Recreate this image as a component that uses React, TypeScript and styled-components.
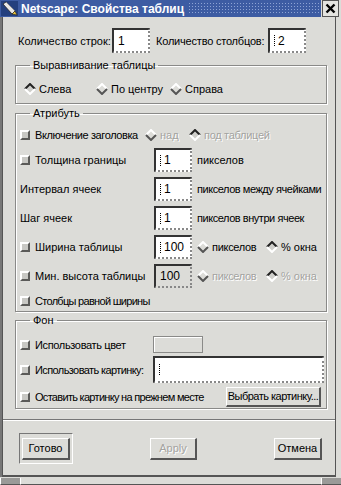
import React, { FC } from 'react'
import styled, { createGlobalStyle, css } from 'styled-components'

const GlobalStyle = createGlobalStyle`
  html, body {
    margin: 0;
    padding: 0;
    background: #dcdcd8;
  }
`;

const BG = '#dcdcd8';

const Window = styled.div`
  width: 341px;
  height: 485px;
  display: flex;
  flex-direction: column;
  background: ${BG};
  font-family: "Liberation Sans", Arial, sans-serif;
  font-size: 11px;
  color: #000;
  overflow: hidden;
  box-sizing: border-box;
`;

const TitleBar = styled.div`
  height: 17px;
  display: flex;
  align-items: stretch;
  flex-shrink: 0;
`;

const TitleBlue = styled.div`
  flex: 1;
  display: flex;
  align-items: center;
  background: #3d5ca3;
  padding-left: 1px;
`;

const Title = styled.span`
  color: #fff;
  font-weight: bold;
  font-size: 12px;
  margin-left: 3px;
  white-space: nowrap;
`;

const Dots = styled.span`
  flex: 1;
  align-self: stretch;
  margin: 2px 0 2px 4px;
  background-image: radial-gradient(circle, #8da3d4 0.7px, transparent 0.9px);
  background-size: 3px 3px;
`;

const CloseBox = styled.div`
  width: 15px;
  height: 15px;
  margin: 0 2px 0 1px;
  border: 1px solid #555;
  background: #e4e4e0;
  display: flex;
  align-items: center;
  justify-content: center;
`;

const Frame = styled.div`
  flex: 1;
  display: flex;
  flex-direction: column;
  margin: 0 5px 0 2px;
  border-left: 1px solid #555;
  border-right: 1px solid #555;
  border-bottom: 2px solid #555;
  box-shadow: -2px 0 0 #777;
`;

const TopRow = styled.div`
  display: flex;
  align-items: center;
  height: 25px;
  margin-top: 11px;
  padding-left: 15px;
`;

const dimText = css`
  color: #a3a3a0;
  text-shadow: 1px 1px 0 #fff;
`;

const Label = styled.span<{ $w?: number; $dim?: boolean; $ls?: number }>`
  white-space: nowrap;
  ${p => p.$w !== undefined && css`width: ${p.$w}px; flex-shrink: 0;`}
  ${p => p.$ls !== undefined && css`letter-spacing: ${p.$ls}px;`}
  ${p => p.$dim && dimText}
`;

const Field = styled.div<{ $w?: number; $h?: number; $disabled?: boolean }>`
  box-sizing: border-box;
  width: ${p => p.$w ?? 38}px;
  height: ${p => p.$h ?? 24}px;
  flex-shrink: 0;
  display: flex;
  align-items: center;
  padding-left: 4px;
  background: ${p => (p.$disabled ? BG : '#fff')};
  border-top: 2px solid #333;
  border-left: 2px solid #333;
  border-right: 2px dotted #888;
  border-bottom: 2px dotted #888;
  font-size: 12px;
`;

const Caret = styled.span`
  width: 2px;
  height: 11px;
  margin-right: 1px;
  border-left: 1px dotted #000;
  flex-shrink: 0;
`;

const Group = styled.fieldset<{ $pt: number; $pb: number; $mt: number }>`
  margin: ${p => p.$mt}px 0 0 12px;
  width: 312px;
  box-sizing: border-box;
  padding: ${p => p.$pt}px 5px ${p => p.$pb}px 4px;
  border: 1px solid #8a8a88;
  box-shadow: 1px 1px 0 #fff, inset 1px 1px 0 #fff;
  min-width: 0;
`;

const Legend = styled.legend`
  margin-left: 10px;
  padding: 0 3px;
  line-height: 14px;
  height: 14px;
  font-size: 11px;
`;

const RadioRow = styled.div`
  display: flex;
  align-items: center;
  height: 14px;
  padding-left: 4px;
`;

const Option = styled.label<{ $w?: number; $ml?: number }>`
  display: flex;
  align-items: center;
  gap: 3px;
  white-space: nowrap;
  ${p => p.$w !== undefined && css`width: ${p.$w}px; flex-shrink: 0;`}
  ${p => p.$ml !== undefined && css`margin-left: ${p.$ml}px;`}
`;

const Row = styled.div<{ $h: number; $mt: number }>`
  display: flex;
  align-items: center;
  height: ${p => p.$h}px;
  margin-top: ${p => p.$mt}px;
`;

const CheckLabel = styled.label<{ $w?: number }>`
  display: flex;
  align-items: center;
  gap: 5px;
  white-space: nowrap;
  ${p => p.$w !== undefined && css`width: ${p.$w}px; flex-shrink: 0;`}
`;

const Box = styled.span`
  box-sizing: border-box;
  width: 10px;
  height: 10px;
  flex-shrink: 0;
  background: #c8c8c4;
  border-top: 2px solid #fff;
  border-left: 2px solid #fff;
  border-right: 2px solid #5a5a58;
  border-bottom: 2px solid #5a5a58;
`;

const Unit = styled.span<{ $dim?: boolean; $ls?: number }>`
  margin-left: 5px;
  white-space: nowrap;
  ${p => p.$ls !== undefined && css`letter-spacing: ${p.$ls}px;`}
  ${p => p.$dim && dimText}
`;

const ColorWell = styled.div`
  width: 50px;
  height: 17px;
  box-sizing: border-box;
  border: 1px solid #8a8a88;
  box-shadow: inset 1px 1px 0 #fff;
  margin-left: -1px;
`;

const RaisedButton = styled.button<{ $w: number; $h: number; $ls?: number }>`
  box-sizing: border-box;
  width: ${p => p.$w}px;
  height: ${p => p.$h}px;
  padding: 0;
  white-space: nowrap;
  overflow: hidden;
  background: ${BG};
  font-family: inherit;
  font-size: 11px;
  color: #000;
  ${p => p.$ls !== undefined && css`letter-spacing: ${p.$ls}px;`}
  border-top: 1px solid #fff;
  border-left: 1px solid #fff;
  border-right: 2px solid #555;
  border-bottom: 2px solid #555;
  cursor: default;
  &:disabled {
    ${dimText}
  }
`;

const Separator = styled.div`
  margin-top: 10px;
  height: 0;
  border-top: 1px solid #777;
  border-bottom: 1px solid #fff;
`;

const ButtonRow = styled.div`
  display: flex;
  align-items: center;
  justify-content: space-between;
  margin-top: 12px;
  height: 31px;
  padding: 0 13px 0 16px;
`;

const DefaultRing = styled.div`
  box-sizing: border-box;
  width: 54px;
  height: 31px;
  display: flex;
  align-items: center;
  justify-content: center;
  border-top: 1px solid #777;
  border-left: 1px solid #777;
  border-right: 1px solid #fff;
  border-bottom: 1px solid #fff;
`;

const BottomEdge = styled.div`
  height: 8px;
  flex-shrink: 0;
  display: flex;
`;

const Handle = styled.div<{ $w?: number }>`
  ${p => (p.$w ? css`width: ${p.$w}px;` : css`flex: 1;`)}
  height: 6px;
  margin-top: 1px;
  background: ${p => (p.$w ? '#9a9a98' : BG)};
  border-left: 1px solid #fff;
  border-bottom: 1px solid #555;
`;

const AppIcon: FC = () => (
  <svg width="17" height="15" viewBox="0 0 17 15">
    <rect width="17" height="15" fill="#24407e" />
    <path d="M2 3 L5 1 L14 10 L11 13 Z" fill="#e8e8e8" stroke="#222" strokeWidth="0.8" />
    <path d="M5 1 L14 10" stroke="#888" strokeWidth="1" />
    <path d="M11 13 L14 10 L16 14 Z" fill="#e8c23a" stroke="#222" strokeWidth="0.6" />
  </svg>
);

const Diamond: FC<{ on?: boolean }> = ({ on }) => (
  <svg width="12" height="12" viewBox="0 0 12 12" style={{ flexShrink: 0 }}>
    <polygon points="6,1 11,6 6,11 1,6" fill={on ? '#cfcfcb' : BG} />
    <polyline points="1,6 6,1 11,6" fill="none" stroke={on ? '#222' : '#fff'} strokeWidth="2" />
    <polyline points="1,6 6,11 11,6" fill="none" stroke={on ? '#fff' : '#555'} strokeWidth="2" />
  </svg>
);

type RadioProps = { on?: boolean; dim?: boolean; w?: number; ml?: number; ls?: number; children: React.ReactNode };

const Radio: FC<RadioProps> = ({ on, dim, w, ml, ls, children }) => (
  <Option $w={w} $ml={ml}>
    <Diamond on={on} />
    <Label $dim={dim} $ls={ls}>{children}</Label>
  </Option>
);

const Check: FC<{ w?: number; ls?: number; children: React.ReactNode }> = ({ w, ls, children }) => (
  <CheckLabel $w={w}>
    <Box />
    <Label $ls={ls}>{children}</Label>
  </CheckLabel>
);

const Input: FC<{ value?: string; w?: number; h?: number; caret?: boolean; disabled?: boolean }> = ({ value, w, h, caret = true, disabled }) => (
  <Field $w={w} $h={h} $disabled={disabled}>
    {caret && <Caret />}
    {value}
  </Field>
);

export default function App() {
  return (
    <Window>
      <GlobalStyle />
      <TitleBar>
        <TitleBlue>
          <AppIcon />
          <Title>Netscape: Свойства таблиц</Title>
          <Dots />
        </TitleBlue>
        <CloseBox>
          <svg width="11" height="11" viewBox="0 0 11 11">
            <path d="M1.5 1.5 L9.5 9.5 M9.5 1.5 L1.5 9.5" stroke="#000" strokeWidth="2.4" />
          </svg>
        </CloseBox>
      </TitleBar>
      <Frame>
        <TopRow>
          <Label $w={94}>Количество строк:</Label>
          <Input w={38} h={25} value="1" caret={false} />
          <Label $w={112} $ls={-0.2} style={{ marginLeft: 6 }}>Количество столбцов:</Label>
          <Input w={38} h={25} value="2" />
        </TopRow>

        <Group $mt={5} $pt={10} $pb={7}>
          <Legend>Выравнивание таблицы</Legend>
          <RadioRow>
            <Radio on w={72}>Слева</Radio>
            <Radio w={74}>По центру</Radio>
            <Radio>Справа</Radio>
          </RadioRow>
        </Group>

        <Group $mt={2} $pt={6} $pb={3}>
          <Legend>Атрибуть</Legend>
          <Row $h={18} $mt={0}>
            <Check w={125} ls={-0.4}>Включение заголовка</Check>
            <Radio dim w={44}>над</Radio>
            <Radio on dim ls={-0.3}>под таблицей</Radio>
          </Row>
          <Row $h={24} $mt={4}>
            <Check w={134}>Толщина границы</Check>
            <Input value="1" />
            <Unit>пикселов</Unit>
          </Row>
          <Row $h={24} $mt={5}>
            <Label $w={134}>Интервал ячеек</Label>
            <Input value="1" />
            <Unit $ls={-0.45}>пикселов между ячейками</Unit>
          </Row>
          <Row $h={24} $mt={5}>
            <Label $w={134}>Шаг ячеек</Label>
            <Input value="1" />
            <Unit $ls={-0.45}>пикселов внутри ячеек</Unit>
          </Row>
          <Row $h={24} $mt={5}>
            <Check w={134}>Ширина таблицы</Check>
            <Input value="100" />
            <Radio ml={5} w={69} ls={-0.3}>пикселов</Radio>
            <Radio on>% окна</Radio>
          </Row>
          <Row $h={24} $mt={5}>
            <Check w={134}>Мин. высота таблицы</Check>
            <Input value="100" caret={false} disabled />
            <Radio ml={5} w={69} ls={-0.3} dim>пикселов</Radio>
            <Radio on dim>% окна</Radio>
          </Row>
          <Row $h={14} $mt={6}>
            <Check ls={-0.7}>Столбцы равной ширины</Check>
          </Row>
        </Group>

        <Group $mt={1} $pt={9} $pb={2}>
          <Legend>Фон</Legend>
          <Row $h={17} $mt={0}>
            <Check w={134} ls={-0.35}>Использовать цвет</Check>
            <ColorWell />
          </Row>
          <Row $h={27} $mt={3}>
            <Check w={133} ls={-0.6}>Использовать картинку:</Check>
            <Input w={171} h={27} />
          </Row>
          <Row $h={19} $mt={4}>
            <Check w={206} ls={-0.7}>Оставить картинку на прежнем месте</Check>
            <RaisedButton $w={98} $h={20} $ls={-0.5}>Выбрать картинку...</RaisedButton>
          </Row>
        </Group>

        <Separator />

        <ButtonRow>
          <DefaultRing>
            <RaisedButton $w={48} $h={22}>Готово</RaisedButton>
          </DefaultRing>
          <RaisedButton $w={47} $h={22} disabled>Apply</RaisedButton>
          <RaisedButton $w={48} $h={22}>Отмена</RaisedButton>
        </ButtonRow>
      </Frame>
      <BottomEdge>
        <Handle $w={19} />
        <Handle />
        <Handle $w={19} />
      </BottomEdge>
    </Window>
  );
}
